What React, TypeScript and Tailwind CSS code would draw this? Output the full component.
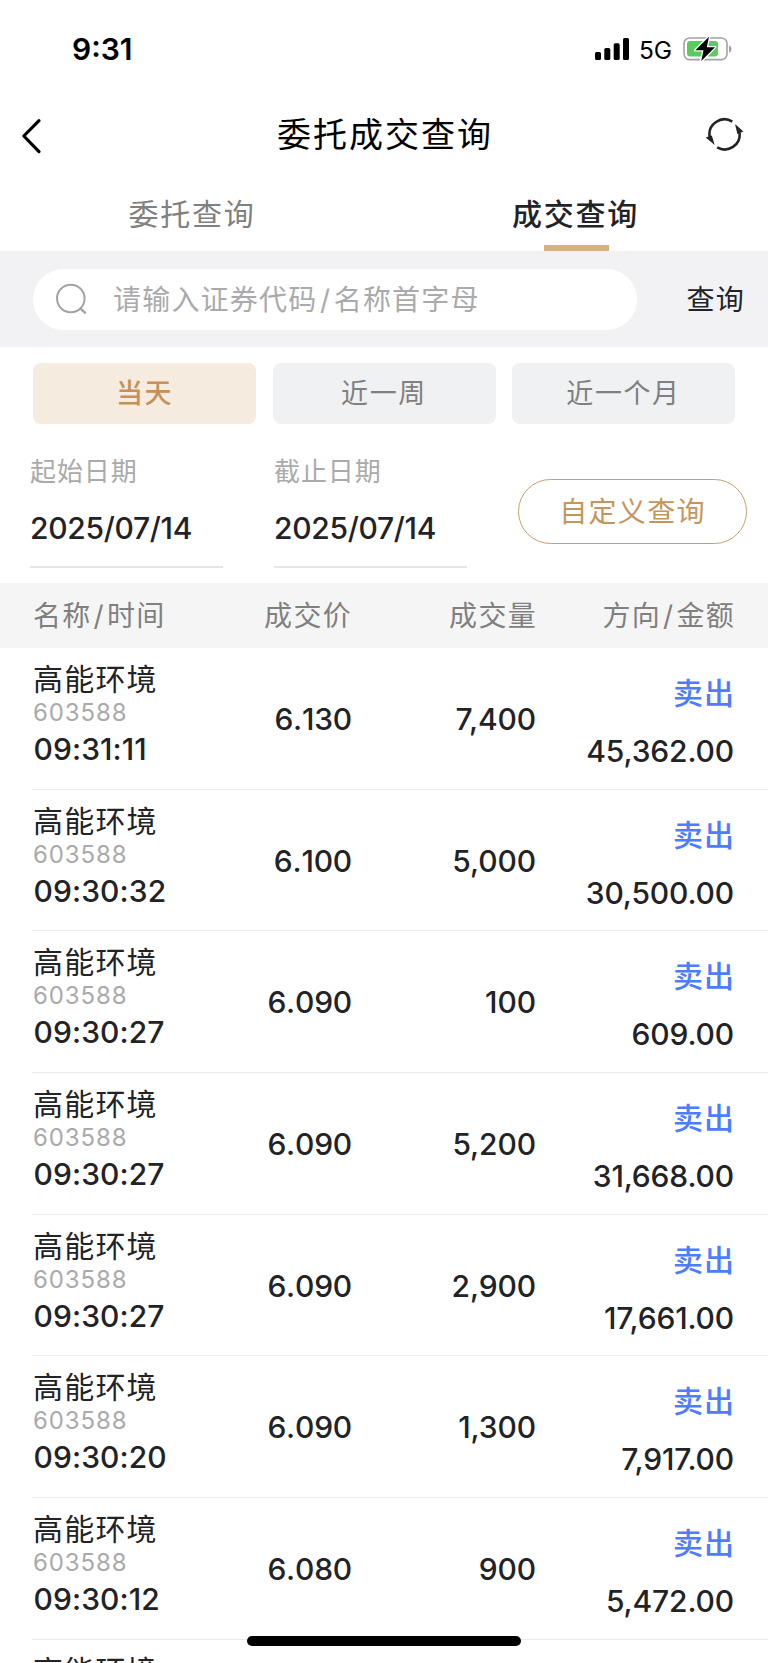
type Trade = { time: string; price: string; volume: string; amount: string };

const trades: Trade[] = [
  { time: "09:31:11", price: "6.130", volume: "7,400", amount: "45,362.00" },
  { time: "09:30:32", price: "6.100", volume: "5,000", amount: "30,500.00" },
  { time: "09:30:27", price: "6.090", volume: "100", amount: "609.00" },
  { time: "09:30:27", price: "6.090", volume: "5,200", amount: "31,668.00" },
  { time: "09:30:27", price: "6.090", volume: "2,900", amount: "17,661.00" },
  { time: "09:30:20", price: "6.090", volume: "1,300", amount: "7,917.00" },
  { time: "09:30:12", price: "6.080", volume: "900", amount: "5,472.00" },
  { time: "09:30:12", price: "6.080", volume: "900", amount: "5,472.00" },
];

function StatusBar() {
  return (
    <div className="flex h-[96px] shrink-0 items-center justify-between pl-[72px] pr-[35px] pt-[2px] text-black">
      <span className="text-[30px] leading-[36px] font-semibold">9:31</span>
      <div className="flex items-center">
        <svg width="34" height="22" viewBox="0 0 34 22" fill="currentColor">
          <rect x="0" y="14" width="6" height="8" rx="1.6" />
          <rect x="9.3" y="10" width="6" height="12" rx="1.6" />
          <rect x="18.7" y="5.3" width="6" height="16.7" rx="1.6" />
          <rect x="28" y="0" width="6" height="22" rx="1.6" />
        </svg>
        <span className="ml-[10px] w-[34px] pt-[2px] text-[24.5px] leading-[30px] font-normal tracking-[-0.2px]">5G</span>
        <svg className="ml-[10px]" width="50" height="26" viewBox="0 0 50 26" fill="none">
          <rect x="1" y="2" width="43" height="21.6" rx="5.5" stroke="#a3a3a6" strokeWidth="1.6" />
          <path d="M46 9.3c1.7.7 2.5 2 2.5 3.7s-.8 3-2.5 3.7z" fill="#a3a3a6" />
          <rect x="4" y="5" width="31" height="15.6" rx="3" fill="#5bcb5f" />
          <path d="M26 .8 12.3 14.3h8.2L18.3 25 32 11.2h-8.2z" fill="#000" stroke="#fff" strokeWidth="2.6" paintOrder="stroke" strokeLinejoin="round" />
        </svg>
      </div>
    </div>
  );
}

function Header() {
  return (
    <div className="flex h-[80px] shrink-0 items-center justify-between pl-[20px] pr-[24px] text-black">
      <svg width="24" height="38" viewBox="0 0 24 38" fill="none" stroke="currentColor" strokeWidth="3.2" strokeLinecap="round" strokeLinejoin="round">
        <path d="M19 3.6 3.8 19 19 34.6" />
      </svg>
      <h1 className="mb-[2px] ml-[22px] text-[34px] leading-[40px] font-normal tracking-[2px]">委托成交查询</h1>
      <svg width="40" height="38" viewBox="0 0 40 38" fill="none" stroke="#222326" strokeWidth="2.6">
        <path d="M28.3 4.6A15 15 0 0 0 5.7 20" />
        <path d="M13.2 30.4A15 15 0 0 0 35.6 15.6" />
        <path d="M31 6.9 39.4 14.4 33.4 17z" fill="#222326" stroke="none" />
        <path d="M10.7 28.1 1.7 20.6 7.8 18.6z" fill="#222326" stroke="none" />
      </svg>
    </div>
  );
}

function Tabs() {
  return (
    <div className="grid h-[75px] shrink-0 grid-cols-2 text-[30px] leading-[40px] tracking-[1.7px]">
      <div className="flex justify-center pt-[18px] text-[#808080]">委托查询</div>
      <div className="flex flex-col items-center justify-between pt-[18px] font-medium text-[#222326]">
        <span className="mr-[1px]">成交查询</span>
        <span className="h-[6px] w-[65px] bg-[#d9b180]" />
      </div>
    </div>
  );
}

function SearchBar() {
  return (
    <div className="flex h-[96px] shrink-0 items-center bg-[#f2f2f4] pr-[23px] pl-[33px]">
      <div className="flex h-[61px] w-[604px] items-center rounded-full bg-white pl-[22px] text-[28px] tracking-[1.2px] text-[#aaaaad]">
        <svg width="34" height="34" viewBox="0 0 34 34" fill="none" stroke="#a3a3a6" strokeWidth="2">
          <circle cx="15.8" cy="16.5" r="13.8" />
          <path d="m25 26.1 5.8 5.2" strokeWidth="2.4" />
        </svg>
        <span className="mt-[1px] ml-[24px] leading-[36px]">请输入证券代码<span className="px-[2.5px]">/</span>名称首字母</span>
      </div>
      <span className="mt-[1px] ml-auto text-[28px] leading-[36px] tracking-[1.2px] text-[#222326]">查询</span>
    </div>
  );
}

function RangeButtons() {
  return (
    <div className="grid h-[77px] shrink-0 grid-cols-3 gap-[16.5px] px-[33px] pt-[16px] text-[27px] leading-[36px] tracking-[1.6px] text-[#808080]">
      <button className="flex h-[61px] items-center justify-center rounded-[8px] bg-[#f6ebdf] font-medium text-[#c4915c]">当天</button>
      <button className="flex h-[61px] items-center justify-center rounded-[8px] bg-[#f0f1f3]">近一周</button>
      <button className="flex h-[61px] items-center justify-center rounded-[8px] bg-[#f0f1f3]">近一个月</button>
    </div>
  );
}

function DateField({ label, value }: { label: string; value: string }) {
  return (
    <div className="h-[143.5px] w-[193px] border-b-2 border-[#e6e6e6] pt-[30px]">
      <div className="text-[26px] leading-[36px] tracking-[0.9px] text-[#aaaaaa]">{label}</div>
      <div className="mt-[20px] text-[30px] leading-[36px] font-medium tracking-[-0.3px] text-[#222326]">{value}</div>
    </div>
  );
}

function DateRow() {
  return (
    <div className="flex h-[159px] shrink-0 items-start pl-[30px]">
      <DateField label="起始日期" value="2025/07/14" />
      <div className="ml-[51px]">
        <DateField label="截止日期" value="2025/07/14" />
      </div>
      <button className="mt-[55px] ml-[51px] flex h-[65px] w-[229px] items-center justify-center rounded-full border border-[#c9a06c] text-[28px] leading-[36px] tracking-[1.3px] text-[#c4965c]">
        自定义查询
      </button>
    </div>
  );
}

function TableHead() {
  return (
    <div className="flex h-[65px] shrink-0 items-center bg-[#f5f5f5] pl-[33px] text-[28px] leading-[36px] tracking-[1.3px] text-[#808080]">
      <span className="w-[150px]">名称<span className="px-[2px]">/</span>时间</span>
      <span className="w-[169px] text-right">成交价</span>
      <span className="w-[185px] text-right">成交量</span>
      <span className="w-[198px] text-right">方向<span className="px-[2px]">/</span>金额</span>
    </div>
  );
}

function TradeRow({ trade }: { trade: Trade }) {
  return (
    <div className="ml-[32px] flex h-[141.7px] shrink-0 border-b border-[#ececee] pl-[1px] text-[30px] leading-[36px] font-medium text-[#222326]">
      <div className="flex w-[150px] flex-col pt-[13px]">
        <span className="font-normal tracking-[1.2px]">高能环境</span>
        <span className="mt-[2px] text-[24px] leading-[28px] font-normal tracking-[0.9px] text-[#aaaaaa]">603588</span>
        <span className="mt-[4px] pl-[0.5px] tracking-[0.1px] [font-kerning:none]">{trade.time}</span>
      </div>
      <span className="w-[169px] pt-[53px] text-right tracking-[-0.2px] [font-kerning:none]">{trade.price}</span>
      <span className="w-[184px] pt-[53px] text-right tracking-[-0.1px]">{trade.volume}</span>
      <div className="flex w-[198px] flex-col items-end pt-[27px]">
        <span className="-mr-[1px] tracking-[1px] text-[#4d7cfe]">卖出</span>
        <span className="mt-[22px] tracking-[-0.15px]">{trade.amount}</span>
      </div>
    </div>
  );
}

export default function App() {
  return (
    <div className="relative flex h-[1663px] w-[768px] flex-col overflow-hidden bg-white font-[Inter,'Noto_Sans_CJK_SC',sans-serif] whitespace-nowrap">
      <StatusBar />
      <Header />
      <Tabs />
      <SearchBar />
      <RangeButtons />
      <DateRow />
      <TableHead />
      {trades.map((trade, i) => (
        <TradeRow key={i} trade={trade} />
      ))}
      <div className="absolute bottom-[17px] left-[247px] h-[10px] w-[274px] rounded-full bg-black" />
    </div>
  );
}
